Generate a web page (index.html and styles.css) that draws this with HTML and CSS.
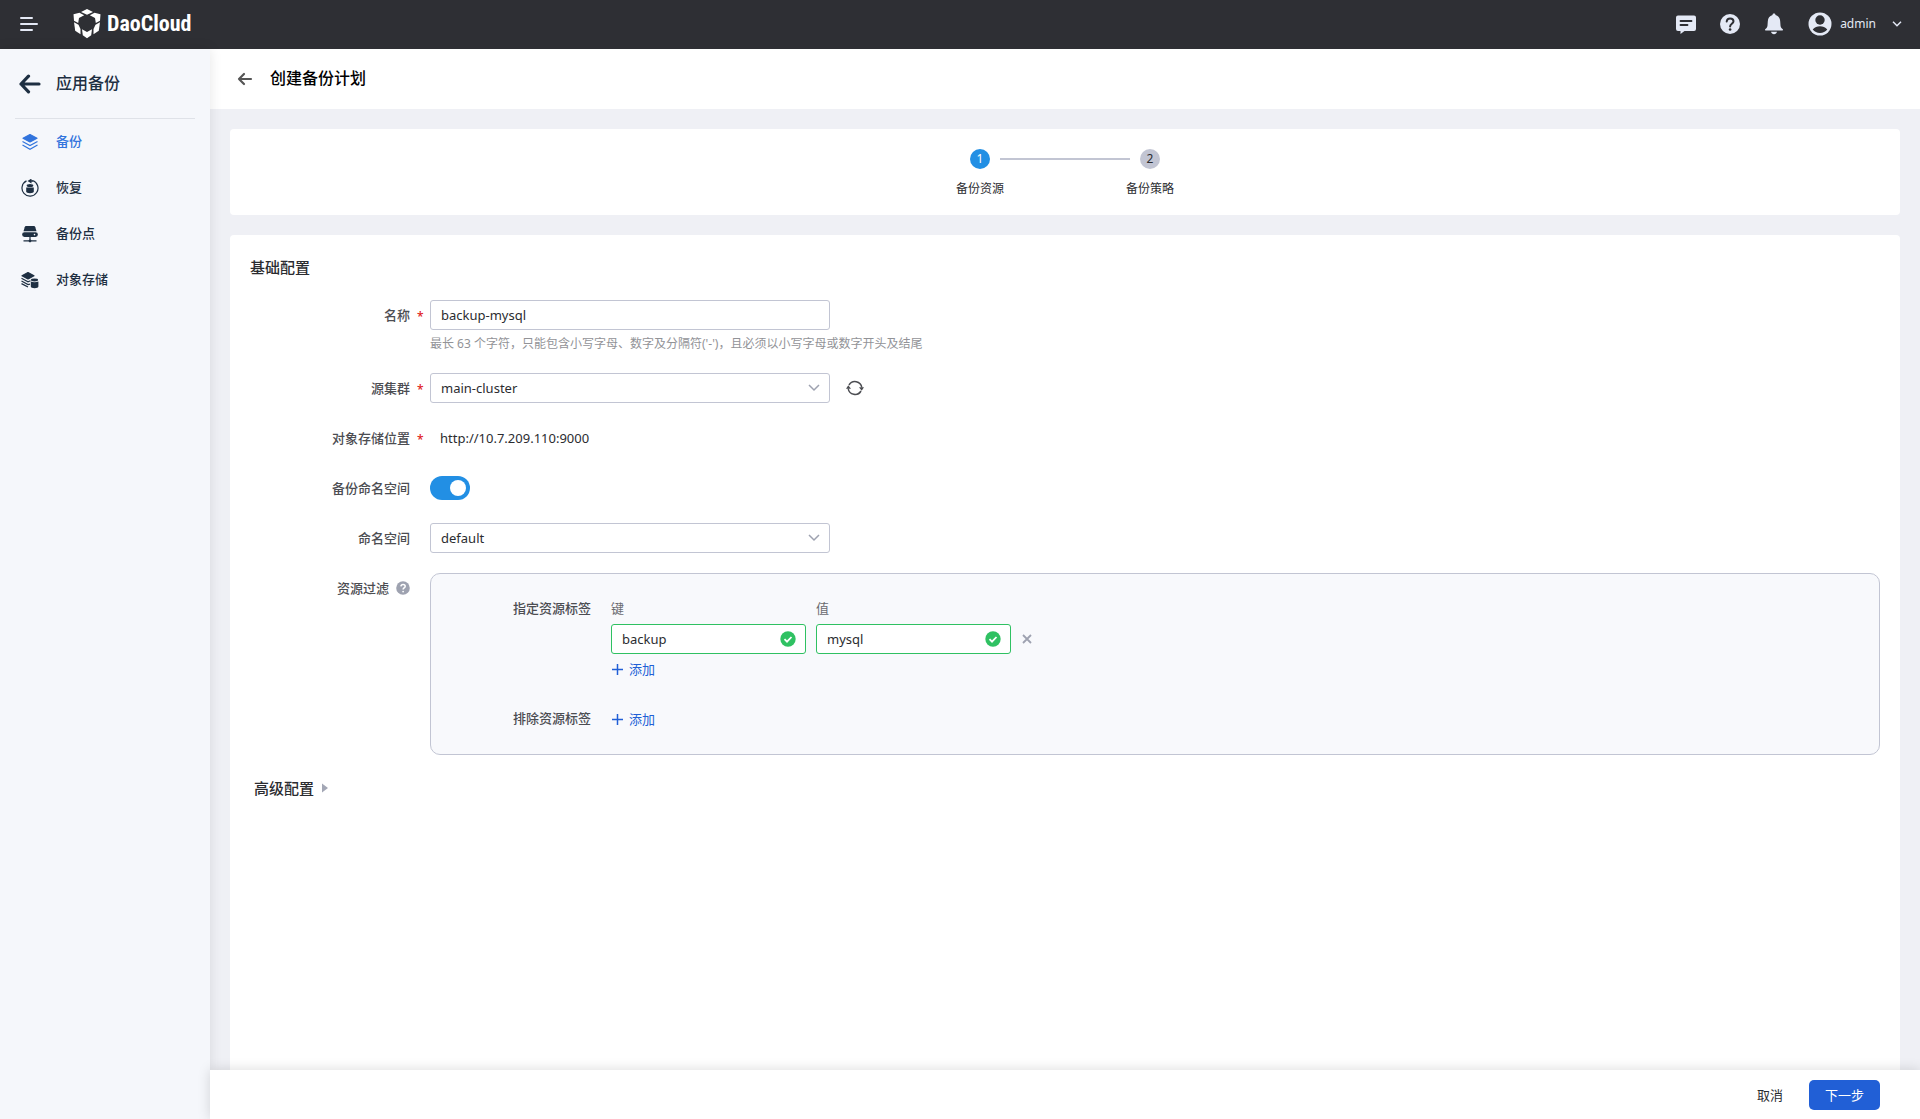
FILE: index.html
```html
<!DOCTYPE html>
<html lang="zh-CN">
<head>

  <meta charset="utf-8" />
  <meta name="viewport" content="width=device-width, initial-scale=1" />

  <title>创建备份计划 - DaoCloud</title>

  <link rel="stylesheet" href="styles.css">

</head>
<body>
  <header class="topbar">
    <button class="icon-btn menu-btn" type="button" aria-label="菜单">
      <svg width="18" height="16" viewBox="0 0 18 16" fill="none" stroke="currentColor" stroke-width="2" stroke-linecap="round">
        <path d="M1 2h11M1 8h16M1 14h11" />
      </svg>
    </button>
    <a class="brand" href="#">
      <svg width="28" height="30" viewBox="0 0 28 30" fill="currentColor">
        <path d="M14 0l6 3-6 2.800L8 3z" />
        <path d="M.5 5.300 6.500 3.700l4.700 2.500L6 8.900l-.8 5-4.200-2.200z" />
        <path d="M27.500 5.300 21.500 3.700l-4.700 2.500L22 8.900l.8 5 4.200-2.200z" />
        <path d="M1 13.200 5.500 15.800 7.500 20v5.300L2.200 21.700z" />
        <path d="M27 13.200 22.500 15.800 20.500 20v5.300l5.300-3.600z" />
        <path d="M9 20.200 14 23l5-2.800-.8 6.100L14 29.200l-4.200-2.900z" />
      </svg>
      <span>DaoCloud</span>
    </a>
    <div class="topbar-tools">
      <button class="icon-btn" type="button" aria-label="消息">
        <svg width="20" height="20" viewBox="0 0 20 20">
          <path d="M2 1.500h16a2 2 0 0 1 2 2V15a2 2 0 0 1-2 2H8.500L4.500 20v-3H2a2 2 0 0 1-2-2V3.500a2 2 0 0 1 2-2z" fill="currentColor" />
          <path d="M4.500 7h11M4.500 11h7" stroke="#2e2f34" stroke-width="1.800" stroke-linecap="round" />
        </svg>
      </button>
      <button class="icon-btn" type="button" aria-label="帮助">
        <svg width="20" height="20" viewBox="0 0 20 20">
          <circle cx="10" cy="10" r="10" fill="currentColor" />
          <path d="M6.700 7.500c.2-2 1.500-3.100 3.400-3.100s3.400 1.200 3.400 2.900c0 2.400-3.400 2.500-3.400 5.100" fill="none" stroke="#2e2f34" stroke-width="2" stroke-linecap="round" />
          <circle cx="10.100" cy="15.500" r="1.300" fill="#2e2f34" />
        </svg>
      </button>
      <button class="icon-btn" type="button" aria-label="通知">
        <svg width="20" height="22" viewBox="0 0 20 22" fill="currentColor">
          <path d="M10 .6c.8 0 1.400.5 1.500 1.300 3 .8 4.500 3.200 4.700 6.300l.3 4.300c.1 1.500.8 2.500 2 3.400.8.600.8 1.600-.2 1.600H1.700c-1 0-1-1-.2-1.600 1.200-.9 1.900-1.900 2-3.400l.3-4.300C4 5.100 5.500 2.700 8.500 1.900 8.600 1.100 9.200.6 10 .6z" />
          <path d="M7 18.800h6c-.3 1.600-1.500 2.500-3 2.500s-2.700-.9-3-2.500z" />
        </svg>
      </button>
      <button class="icon-btn user" type="button">
        <svg width="24" height="24" viewBox="0 0 24 24">
          <circle cx="12" cy="12" r="11.500" fill="currentColor" />
          <circle cx="12" cy="8" r="4.700" fill="#2e2f34" />
          <path d="M4.700 17.500c2-2.300 4.500-3.200 7.300-3.200s5.300.9 7.300 3.200c-1.900 2.300-4.300 3.400-7.300 3.400s-5.400-1.100-7.300-3.400z" fill="#2e2f34" />
        </svg>
        <span>admin</span>
        <svg class="chevron" width="10" height="6" viewBox="0 0 10 6" fill="none" stroke="currentColor" stroke-width="1.500">
          <path d="m1 .7 4 4 4-4" />
        </svg>
      </button>
    </div>
  </header>

  <div class="layout">
    <aside class="sidebar">
      <div class="sidebar-head">
        <a href="#" aria-label="返回">
          <svg width="22" height="20" viewBox="0 0 22 20" fill="none" stroke="currentColor" stroke-width="3.200" stroke-linecap="round" stroke-linejoin="round">
            <path d="M20 10H2M9.500 2.200 2 10l7.500 7.800" />
          </svg>
        </a>
        <span>应用备份</span>
      </div>
      <nav class="menu">
        <a class="menu-item active" href="#">
          <svg width="18" height="18" viewBox="0 0 18 18" fill="none" stroke="currentColor" stroke-width="1.200">
            <path d="M9 1.500 16 5.300 9 9 2 5.300z" fill="currentColor" stroke-linejoin="round" />
            <path d="m1.500 8.500 7.500 4 7.500-4M1.500 12l7.500 4.200 7.500-4.200" />
          </svg>
          <span>备份</span>
        </a>
        <a class="menu-item" href="#">
          <svg width="18" height="18" viewBox="0 0 18 18" fill="none" stroke="currentColor">
            <path d="M5.500 1.900a8 8 0 1 0 6-.4" stroke-width="1.200" />
            <path d="m6.500 2 4-2.500v1.800h1.500v1.400h-1.500v1.800z" fill="currentColor" stroke="none" />
            <ellipse cx="9" cy="6.500" rx="3.300" ry="1.500" fill="currentColor" stroke="none" />
            <path d="M5.200 8.500h7.600v4.300c0 .8-1.700 1.400-3.800 1.400s-3.800-.6-3.800-1.400z" fill="currentColor" stroke="none" />
          </svg>
          <span>恢复</span>
        </a>
        <a class="menu-item" href="#">
          <svg width="18" height="18" viewBox="0 0 18 18" fill="currentColor">
            <path d="M5.500 1h7c1 0 1.500.5 1.800 1.300l1.200 3.900h-13l1.200-3.900C4 1.500 4.500 1 5.500 1z" />
            <path fill-rule="evenodd" d="M3.500 7.200h11a2.400 2.400 0 0 1 0 4.800h-11a2.400 2.400 0 0 1 0-4.800zm10 1.600a.8.8 0 1 0 0 1.600.8.8 0 0 0 0-1.600z" />
            <path d="M8.400 12h1.200v2.600l.9.600h5v1.200h-5L9 17.500l-1.500-1.100h-5v-1.200h5l.9-.6z" />
          </svg>
          <span>备份点</span>
        </a>
        <a class="menu-item" href="#">
          <svg width="18" height="18" viewBox="0 0 18 18" fill="none" stroke="currentColor" stroke-width="1.200">
            <path d="M7 1.500 13 4.700 7 8 1 4.700z" fill="currentColor" stroke-linejoin="round" />
            <path d="m.5 7.300 6.500 3.500 2.500-1M.5 10l6.500 3.600 2-.5M.5 12.600 7 16" />
            <ellipse cx="13.500" cy="9" rx="3.600" ry="1.400" fill="currentColor" stroke="none" />
            <path d="M9.800 10.500c2 1 5.400 1 7.600 0v5c0 1-1.700 1.700-3.800 1.700s-3.800-.7-3.800-1.700z" fill="currentColor" stroke="none" />
          </svg>
          <span>对象存储</span>
        </a>
      </nav>
    </aside>

    <main class="main">
      <div class="page-head">
        <a href="#" aria-label="返回">
          <svg width="16" height="14" viewBox="0 0 16 14" fill="none" stroke="currentColor" stroke-width="2.200" stroke-linecap="round" stroke-linejoin="round">
            <path d="M14 7H2M7 2 2 7l5 5" />
          </svg>
        </a>
        <h1>创建备份计划</h1>
      </div>

      <div class="content">
        <section class="card">
          <ol class="steps">
            <li class="step current"><span class="step-num">1</span><span class="step-name">备份资源</span></li>
            <li class="step-line" aria-hidden="true"></li>
            <li class="step"><span class="step-num">2</span><span class="step-name">备份策略</span></li>
          </ol>
        </section>

        <form class="card form" id="plan">
          <h2>基础配置</h2>

          <div class="row">
            <label class="label required" for="name">名称</label>
            <div class="field">
              <input class="input" id="name" type="text" value="backup-mysql" />
              <p class="help">最长 63 个字符，只能包含小写字母、数字及分隔符('-')，且必须以小写字母或数字开头及结尾</p>
            </div>
          </div>

          <div class="row">
            <label class="label required" for="cluster">源集群</label>
            <div class="field inline">
              <div class="select">
                <select class="input" id="cluster"><option>main-cluster</option></select>
                <svg width="12" height="8" viewBox="0 0 12 8" fill="none" stroke="currentColor" stroke-width="1.500"><path d="m1 1 5 5 5-5" /></svg>
              </div>
              <button class="icon-btn refresh" type="button" aria-label="刷新">
                <svg width="18" height="16" viewBox="0 0 18 16" fill="none" stroke="currentColor" stroke-width="1.500">
                  <path d="M3 5a6.900 6.900 0 0 1 12.800 2.500M15 11A6.900 6.900 0 0 1 2.200 8.500" />
                  <path d="M0 8.800 2.300 5.200 5 8.800zM13 7.200h5l-2.300 3.600z" fill="currentColor" stroke="none" />
                </svg>
              </button>
            </div>
          </div>

          <div class="row">
            <span class="label required">对象存储位置</span>
            <div class="field text">http://10.7.209.110:9000</div>
          </div>

          <div class="row">
            <label class="label" for="backup-ns">备份命名空间</label>
            <div class="field inline">
              <input class="switch" id="backup-ns" type="checkbox" role="switch" checked />
            </div>
          </div>

          <div class="row">
            <label class="label" for="namespace">命名空间</label>
            <div class="field">
              <div class="select">
                <select class="input" id="namespace"><option>default</option></select>
                <svg width="12" height="8" viewBox="0 0 12 8" fill="none" stroke="currentColor" stroke-width="1.500"><path d="m1 1 5 5 5-5" /></svg>
              </div>
            </div>
          </div>

          <div class="row">
            <span class="label">
              资源过滤
              <svg class="tip" width="14" height="14" viewBox="0 0 14 14">
                <circle cx="7" cy="7" r="6.800" fill="currentColor" />
                <path d="M4.900 5.400c.1-1.300 1-2 2.200-2s2.100.8 2.100 1.900c0 1.600-2.100 1.700-2.100 3.200" fill="none" stroke="#fff" stroke-width="1.500" />
                <circle cx="7.100" cy="10.600" r=".9" fill="#fff" />
              </svg>
            </span>
            <div class="field filter">
              <div class="filter-row">
                <span class="filter-label">指定资源标签</span>
                <div>
                  <div class="pair">
                    <div class="pair-col">
                      <label for="tag-key">键</label>
                      <div class="valid">
                        <input class="input" id="tag-key" type="text" value="backup" />
                        <svg width="16" height="16" viewBox="0 0 16 16"><circle cx="8" cy="8" r="7.700" fill="#2fc162" /><path d="m4.500 8.200 2.500 2.500 4.500-4.700" fill="none" stroke="#fff" stroke-width="1.800" /></svg>
                      </div>
                    </div>
                    <div class="pair-col">
                      <label for="tag-value">值</label>
                      <div class="valid">
                        <input class="input" id="tag-value" type="text" value="mysql" />
                        <svg width="16" height="16" viewBox="0 0 16 16"><circle cx="8" cy="8" r="7.700" fill="#2fc162" /><path d="m4.500 8.200 2.500 2.500 4.500-4.700" fill="none" stroke="#fff" stroke-width="1.800" /></svg>
                      </div>
                    </div>
                    <button class="icon-btn remove" type="button" aria-label="删除">
                      <svg width="12" height="12" viewBox="0 0 12 12" stroke="currentColor" stroke-width="1.800"><path d="m2 2 8 8M10 2l-8 8" /></svg>
                    </button>
                  </div>
                  <button class="add" type="button">
                    <svg width="12" height="12" viewBox="0 0 12 12" stroke="currentColor" stroke-width="1.500"><path d="M6.500 1v11M1 6.500h11" /></svg>
                    添加
                  </button>
                </div>
              </div>
              <div class="filter-row">
                <span class="filter-label">排除资源标签</span>
                <button class="add" type="button">
                  <svg width="12" height="12" viewBox="0 0 12 12" stroke="currentColor" stroke-width="1.500"><path d="M6.500 1v11M1 6.500h11" /></svg>
                  添加
                </button>
              </div>
            </div>
          </div>

          <button class="advanced" type="button" aria-expanded="false">
            高级配置
            <svg width="6" height="10" viewBox="0 0 6 10" fill="#a3a7b5"><path d="M0 .5 6 5 0 9.500z" /></svg>
          </button>
        </form>
      </div>

      <footer class="actions">
        <button class="btn" type="button">取消</button>
        <button class="btn primary" type="submit" form="plan">下一步</button>
      </footer>
    </main>
  </div>
</body>
</html>
```

FILE: styles.css
```css
* {
  box-sizing: border-box;
}

body {
  margin: 0;
  display: flex;
  flex-direction: column;
  height: 100vh;
  color: #2b2c30;
  font: 13px/20px "Noto Sans", "Noto Sans CJK SC", sans-serif;
}

h1, h2, p, ol {
  margin: 0;
  padding: 0;
}

a {
  color: inherit;
  text-decoration: none;
}

button, input, select {
  font: inherit;
  color: inherit;
}

svg {
  display: block;
  flex: none;
}

.icon-btn {
  display: flex;
  align-items: center;
  padding: 0;
  border: 0;
  background: none;
  cursor: pointer;
}

/* top bar */

.topbar {
  display: flex;
  align-items: center;
  flex: none;
  height: 49px;
  padding: 0 18px 2px 20px;
  background: #2e2f34;
  color: #e4e9f5;
}

.brand {
  display: flex;
  align-items: center;
  gap: 6px;
  margin-left: 35px;
  color: #fff;
  font: bold 22px/28px "Liberation Sans Narrow", "Roboto Condensed", Roboto, sans-serif;
}

.topbar-tools {
  display: flex;
  align-items: center;
  gap: 24px;
  margin-left: auto;
}

.user {
  gap: 8px;
  font-size: 12px;
}

.chevron {
  margin-left: 8px;
}

/* side menu */

.layout {
  display: flex;
  flex: 1;
  min-height: 0;
}

.sidebar {
  flex: none;
  width: 210px;
  padding: 0 15px;
  background: #f5f7fb;
  color: #1e2f42;
  box-shadow: 0 0 12px rgba(0, 0, 0, 0.1);
  z-index: 1;
}

.sidebar-head {
  display: flex;
  align-items: center;
  gap: 15px;
  height: 70px;
  padding-left: 4px;
  border-bottom: 1px solid #dfe2e8;
  font-size: 16px;
  font-weight: 500;
}

.menu-item {
  display: flex;
  align-items: center;
  gap: 17px;
  height: 46px;
  padding-left: 6px;
  font-weight: 500;
}

.menu-item span, .sidebar-head span {
  padding-bottom: 2px;
}

.menu-item.active {
  color: #3274dd;
}

/* page */

.main {
  display: flex;
  flex: 1;
  flex-direction: column;
  min-width: 0;
  background: #eff0f5;
}

.page-head {
  display: flex;
  align-items: center;
  flex: none;
  gap: 17px;
  height: 60px;
  padding-left: 27px;
  background: #fff;
  color: #555;
}

.page-head h1 {
  padding-bottom: 2px;
  color: #000;
  font-size: 16px;
  font-weight: 500;
}

.content {
  display: flex;
  flex: 1;
  flex-direction: column;
  gap: 20px;
  min-height: 0;
  padding: 20px 20px 0;
  overflow: auto;
}

.card {
  padding: 20px;
  border-radius: 4px;
  background: #fff;
}

.steps {
  display: flex;
  justify-content: center;
  list-style: none;
  font-size: 12px;
}

.step {
  display: flex;
  flex-direction: column;
  align-items: center;
  gap: 10px;
  width: 40px;
  height: 46px;
}

.step-num {
  width: 20px;
  border-radius: 50%;
  background: #c2c5d3;
  text-align: center;
}

.step-name {
  white-space: nowrap;
}

.current .step-num {
  background: #228fe4;
  color: #fff;
}

.step-line {
  width: 130px;
  height: 2px;
  margin-top: 9px;
  background: #c2c5d3;
}

/* form */

.form {
  display: flex;
  flex: 1 0 auto;
  flex-direction: column;
  gap: 20px;
  border-radius: 4px 4px 0 0;
}

.form h2, .advanced {
  height: 25px;
  font-size: 15px;
  font-weight: 500;
  line-height: 24px;
}

.row {
  display: flex;
}

.label {
  display: flex;
  align-items: center;
  justify-content: flex-end;
  flex: none;
  gap: 7px;
  width: 180px;
  height: 30px;
  padding-right: 20px;
  color: #4c4d52;
  font-weight: 500;
}

.required {
  padding-right: 7px;
}

.required::after {
  content: "*";
  width: 6px;
  padding-top: 4px;
  color: #e02020;
  font-size: 12px;
  line-height: 16px;
}

.field {
  flex: 1;
  min-width: 0;
}

.inline {
  display: flex;
  align-items: center;
}

.text {
  padding-left: 10px;
  line-height: 30px;
}

.input {
  display: block;
  width: 400px;
  height: 30px;
  padding: 0 10px;
  border: 1px solid #c2c5d3;
  border-radius: 3px;
  background: #fff;
  appearance: none;
}

.select, .valid {
  position: relative;
  width: fit-content;
}

.select svg, .valid svg {
  position: absolute;
  top: 11px;
  right: 10px;
  color: #9ea2b0;
  pointer-events: none;
}

.valid svg {
  top: 7px;
}

.valid .input {
  width: 195px;
  border-color: #2fc162;
}

.help {
  height: 23px;
  padding-top: 5px;
  color: #929397;
  font-size: 12px;
  line-height: 18px;
}

.refresh {
  margin-left: 16px;
  color: #4c4d52;
}

.switch {
  appearance: none;
  width: 40px;
  height: 24px;
  margin: 0;
  padding: 4px;
  border-radius: 12px;
  background: #c2c5d3;
}

.switch::before {
  content: "";
  display: block;
  width: 16px;
  height: 16px;
  border-radius: 50%;
  background: #fff;
}

.switch:checked {
  background: #228fe4;
}

.switch:checked::before {
  margin-left: auto;
}

.tip {
  color: #9ea2b0;
}

.filter {
  display: flex;
  flex-direction: column;
  gap: 20px;
  padding: 20px;
  border: 1px solid #c2c5d3;
  border-radius: 10px;
  background: #f8f9fc;
}

.filter-row {
  display: flex;
  gap: 20px;
}

.filter-label {
  width: 140px;
  color: #4c4d52;
  font-weight: 500;
  line-height: 28px;
  text-align: right;
}

.pair {
  display: flex;
  align-items: flex-end;
  gap: 10px;
}

.pair-col label {
  display: block;
  height: 30px;
  color: #6a6b70;
  line-height: 28px;
}

.remove {
  height: 30px;
  color: #9ea2b0;
}

.add {
  display: flex;
  align-items: center;
  gap: 6px;
  height: 30px;
  padding: 0;
  border: 0;
  background: none;
  color: #215fd6;
}

.advanced {
  display: flex;
  align-items: center;
  gap: 8px;
  padding: 0 4px;
  border: 0;
  background: none;
}

/* footer */

.actions {
  display: flex;
  align-items: center;
  justify-content: flex-end;
  flex: none;
  gap: 6px;
  height: 49px;
  padding-right: 40px;
  background: #fff;
  box-shadow: 0 0 12px rgba(0, 0, 0, 0.15);
  z-index: 1;
}

.btn {
  height: 30px;
  padding: 0 20px;
  border: 0;
  border-radius: 5px;
  background: none;
}

.primary {
  padding: 0 16px;
  background: #215fd6;
  color: #fff;
}
```
